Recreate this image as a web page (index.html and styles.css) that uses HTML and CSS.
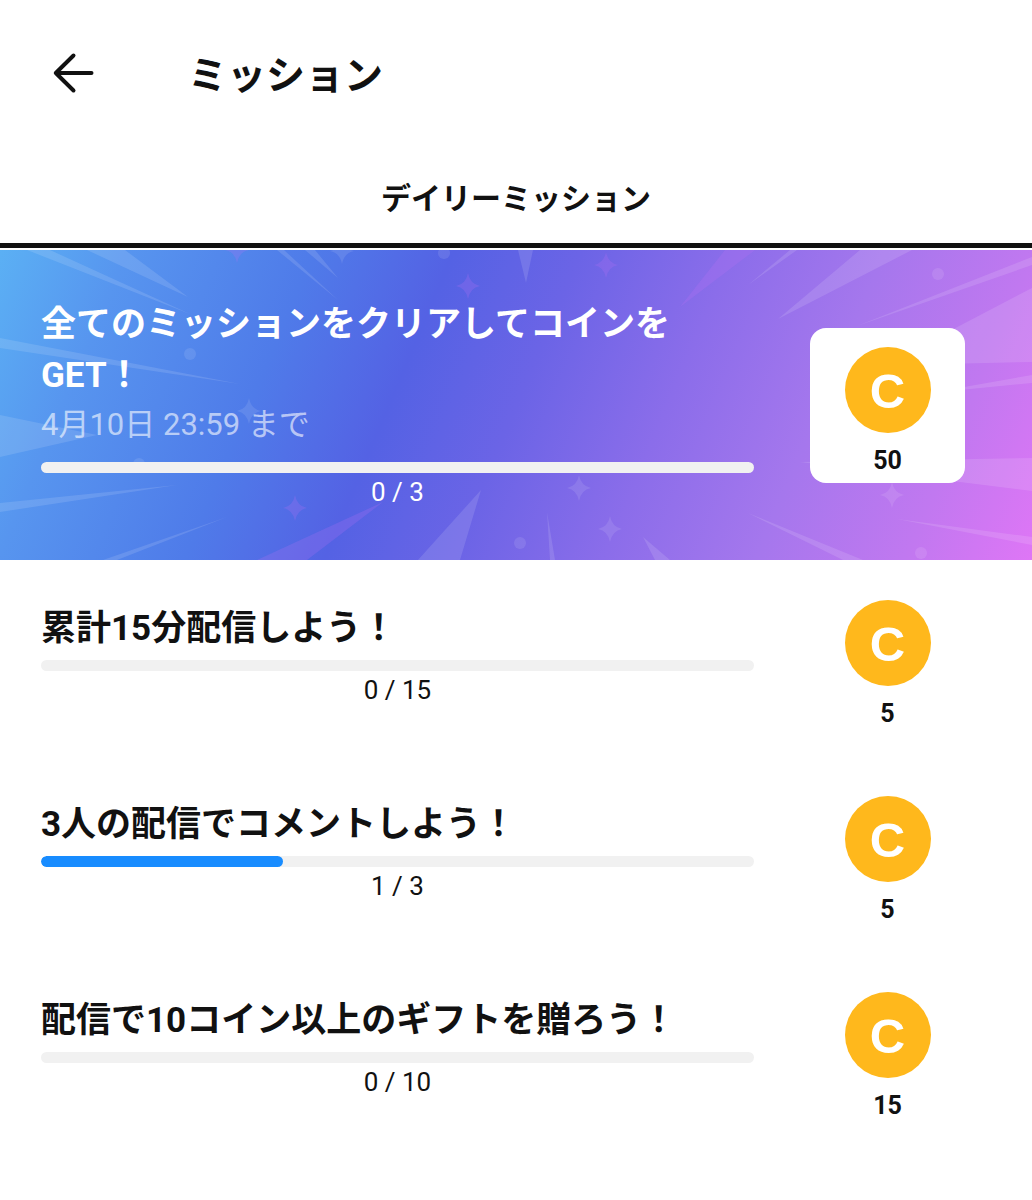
FILE: index.html
```html
<!DOCTYPE html>
<html lang="ja">
<head>
<meta charset="utf-8">
<meta name="viewport" content="width=device-width, initial-scale=1">
<title>ミッション</title>
<link rel="stylesheet" href="styles.css">
</head>
<body>
<header class="app-bar">
  <button class="back" type="button" aria-label="戻る">
    <svg width="42" height="42" viewBox="0 0 42 42" aria-hidden="true"><path d="M21.500 3.500 3.800 21 21.500 38.500M3.800 21H39.500"/></svg>
  </button>
  <h1 class="app-title">ミッション</h1>
</header>
<nav class="tabs">
  <a class="tab" href="#daily" aria-current="page">デイリーミッション</a>
</nav>
<main id="daily">
  <section class="banner">
    <svg class="banner-art" viewBox="0 0 1032 310" preserveAspectRatio="none" aria-hidden="true">
      <defs>
        <linearGradient id="sky" gradientUnits="userSpaceOnUse" x1="0" y1="0" x2="990" y2="415">
          <stop offset="0" stop-color="#5bb0f4"/>
          <stop offset=".11" stop-color="#5795ef"/>
          <stop offset=".27" stop-color="#4f7be9"/>
          <stop offset=".39" stop-color="#5462e4"/>
          <stop offset=".5" stop-color="#6b64e6"/>
          <stop offset=".63" stop-color="#8b6dea"/>
          <stop offset=".76" stop-color="#a577ed"/>
          <stop offset=".89" stop-color="#c178f0"/>
          <stop offset="1" stop-color="#df76f6"/>
        </linearGradient>
        <path id="star" d="M0-13Q2-2 12 0Q2 2 0 13Q-2 2-12 0Q-2-2 0-13Z"/>
      </defs>
      <rect width="1032" height="310" fill="url(#sky)"/>
      <g fill="#fff" fill-opacity=".12">
        <path d="M27 0H50L190 64ZM87 0H125L188 47ZM277 0H284L338 50ZM305 0H315L338 28ZM0 88V98L240 134ZM0 165V207L97 185ZM0 253V262L177 235ZM103 310H117L227 267Z"/>
        <path d="M518 0H533L526 33ZM418 310H460L481 240ZM550 310H555L547 262ZM655 310H670L643 287ZM790 0H797L748 35ZM860 0H912L778 69ZM1032 7V15L857 76Z"/>
        <path d="M1032 38V112L900 115V107ZM1032 125V133L930 143ZM1032 208V241L800 212ZM1032 287V295L897 269ZM843 310H863L748 263Z"/>
      </g>
      <g fill="#c070f8" fill-opacity=".22">
        <path d="M257 310H307L383 252ZM725 0H755L680 57Z"/>
        <use href="#star" x="237" y="0"/><use href="#star" x="295" y="258"/><use href="#star" x="468" y="36"/><use href="#star" x="606" y="15"/>
      </g>
      <g fill="#fff" fill-opacity=".1">
        <use href="#star" x="342" y="1"/><use href="#star" x="249" y="161"/><use href="#star" x="579" y="238"/><use href="#star" x="610" y="279"/><use href="#star" x="892" y="245"/>
        <circle cx="190" cy="104" r="6"/><circle cx="139" cy="214" r="6"/><circle cx="444" cy="3" r="6"/><circle cx="520" cy="293" r="6"/><circle cx="938" cy="24" r="6"/><circle cx="921" cy="303" r="6"/>
      </g>
    </svg>
    <div class="details">
      <h2 class="title" id="m0">全てのミッションをクリアしてコインをGET！</h2>
      <p class="deadline">4月10日 23:59 まで</p>
      <progress class="bar" value="0" max="100" aria-labelledby="m0"></progress>
      <p class="count">0 / 3</p>
    </div>
    <div class="reward reward-card"><span class="coin">C</span><span class="amount">50</span></div>
  </section>
  <section class="mission">
    <div class="details">
      <h2 class="title" id="m1">累計15分配信しよう！</h2>
      <progress class="bar" value="0" max="100" aria-labelledby="m1"></progress>
      <p class="count">0 / 15</p>
    </div>
    <div class="reward"><span class="coin">C</span><span class="amount">5</span></div>
  </section>
  <section class="mission">
    <div class="details">
      <h2 class="title" id="m2">3人の配信でコメントしよう！</h2>
      <progress class="bar" value="34" max="100" aria-labelledby="m2"></progress>
      <p class="count">1 / 3</p>
    </div>
    <div class="reward"><span class="coin">C</span><span class="amount">5</span></div>
  </section>
  <section class="mission">
    <div class="details">
      <h2 class="title" id="m3">配信で10コイン以上のギフトを贈ろう！</h2>
      <progress class="bar" value="0" max="100" aria-labelledby="m3"></progress>
      <p class="count">0 / 10</p>
    </div>
    <div class="reward"><span class="coin">C</span><span class="amount">15</span></div>
  </section>
</main>
</body>
</html>
```
FILE: styles.css
```css
* { box-sizing: border-box; }
body {
  margin: 0;
  background: #fff;
  color: #111;
  font-family: Roboto, "Noto Sans CJK JP", sans-serif;
}
h1, h2, p { margin: 0; }

.app-bar {
  display: flex;
  align-items: center;
  gap: 94px;
  height: 146px;
  padding-left: 52px;
}
.back {
  display: flex;
  padding: 0;
  border: 0;
  background: none;
  cursor: pointer;
}
.back path {
  fill: none;
  stroke: #111;
  stroke-width: 4;
  stroke-linecap: round;
  stroke-linejoin: round;
}
.app-title {
  padding-top: 6px;
  font-size: 39px;
  line-height: 56px;
  font-weight: 700;
}

.tabs { display: flex; padding-bottom: 2px; }
.tab {
  flex: 1;
  padding: 31px 0 22px;
  border-bottom: 5px solid #111;
  color: inherit;
  font-size: 30px;
  line-height: 44px;
  font-weight: 700;
  text-align: center;
  text-decoration: none;
}

.banner, .mission {
  display: grid;
  grid-template-columns: 1fr 155px;
  column-gap: 56px;
  padding: 40px 67px 26px 41px;
}
.banner {
  position: relative;
  align-items: center;
  padding-top: 47px;
  padding-bottom: 47px;
  color: #fff;
}
.banner-art {
  position: absolute;
  inset: 0;
  width: 100%;
  height: 100%;
}
.details { position: relative; }
.title {
  padding-top: 2px;
  font-size: 35px;
  line-height: 51px;
  font-weight: 700;
}
.deadline {
  margin-bottom: 13px;
  color: rgba(255, 255, 255, .6);
  font-size: 31px;
  line-height: 48px;
}
.mission .title {
  padding-top: 3px;
  margin-bottom: 6px;
}
.bar {
  display: block;
  width: 100%;
  height: 11px;
  border: 0;
  border-radius: 6px;
  overflow: hidden;
  background: #f1f1f1;
  appearance: none;
}
.bar::-webkit-progress-bar { background: #f1f1f1; }
.bar::-webkit-progress-value { border-radius: 6px; background: #188cff; }
.bar::-moz-progress-bar { border-radius: 6px; background: #188cff; }
.count {
  font-size: 26px;
  line-height: 38px;
  text-align: center;
}
.banner .count { padding-bottom: 2px; }

.reward {
  position: relative;
  display: flex;
  flex-direction: column;
  align-items: center;
  gap: 12px;
  color: #111;
}
.reward-card {
  padding: 19px 0 6px;
  border-radius: 16px;
  background: #fff;
}
.coin {
  width: 86px;
  height: 86px;
  border-radius: 50%;
  background: #ffb81c;
  color: #fff;
  font: 700 49px/88px "Liberation Sans", sans-serif;
  text-align: center;
}
.amount {
  font-size: 25px;
  line-height: 32px;
  font-weight: 700;
}
```
